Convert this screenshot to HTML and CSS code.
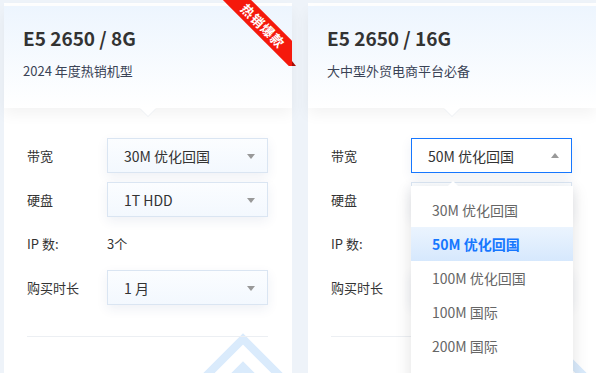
FILE: index.html
```html
<!DOCTYPE html>
<html lang="zh-CN">
<head>
    <meta charset="UTF-8">
    <meta name="viewport" content="width=device-width, initial-scale=1.0">
    <title>服务器选购</title>
    <link rel="stylesheet" href="styles.css">
</head>
<body>
    <div id="main">
        <!-- card 1 -->
        <div class="card">
            <div class="deco">
                <svg width="288" height="400" viewBox="0 0 288 400">
                    <polyline points="169,403 239,333 309,403" fill="none" stroke="#daebfc" stroke-width="8"/>
                    <polyline points="169,431 239,361 309,431" fill="none" stroke="#daebfc" stroke-width="8"/>
                </svg>
            </div>
            <div class="ribbon"><span>热销爆款</span></div>
            <div class="fold"></div>
            <div class="card-head">
                <h2>E5 2650 / 8G</h2>
                <p>2024 年度热销机型</p>
            </div>
            <div class="card-body">
                <div class="row">
                    <label>带宽</label>
                    <div class="select"><span>30M 优化回国</span><i class="arrow"></i></div>
                </div>
                <div class="row">
                    <label>硬盘</label>
                    <div class="select"><span>1T HDD</span><i class="arrow"></i></div>
                </div>
                <div class="row">
                    <label>IP 数:</label>
                    <span class="value">3个</span>
                </div>
                <div class="row">
                    <label>购买时长</label>
                    <div class="select"><span>1 月</span><i class="arrow"></i></div>
                </div>
                <div class="divider"></div>
            </div>
        </div>

        <!-- card 2 -->
        <div class="card">
            <div class="deco">
                <svg width="288" height="400" viewBox="0 0 288 400">
                    <polyline points="169,403 239,333 309,403" fill="none" stroke="#daebfc" stroke-width="8"/>
                    <polyline points="169,431 239,361 309,431" fill="none" stroke="#daebfc" stroke-width="8"/>
                </svg>
            </div>
            <div class="card-head">
                <h2>E5 2650 / 16G</h2>
                <p>大中型外贸电商平台必备</p>
            </div>
            <div class="card-body">
                <div class="row">
                    <label>带宽</label>
                    <div class="select open"><span>50M 优化回国</span><i class="arrow up"></i>
                        <ul class="dropdown">
                            <li>30M 优化回国</li>
                            <li class="active">50M 优化回国</li>
                            <li>100M 优化回国</li>
                            <li>100M 国际</li>
                            <li>200M 国际</li>
                        </ul>
                    </div>
                </div>
                <!-- these sit under the open dropdown -->
                <div class="row">
                    <label>硬盘</label>
                    <div class="select"></div>
                </div>
                <div class="row">
                    <label>IP 数:</label>
                </div>
                <div class="row">
                    <label>购买时长</label>
                    <div class="select"></div>
                </div>
                <div class="divider"></div>
            </div>
        </div>
    </div>
</body>
</html>
```

FILE: styles.css
```css
body {
    font-family: "Noto Sans CJK SC", "Noto Sans", sans-serif;
    background: #eef3f9;
    margin: 0;
    overflow: hidden;
}

#main {
    display: flex;
    gap: 16px;
    padding: 3px 0 0 4px;
    height: 370px;
}

.card {
    position: relative;
    flex: none;
    width: 288px;
    height: 400px;
    padding-top: 3px;
    background: #fff;
}

.deco {
    position: absolute;
    top: 3px;
    left: 0;
    right: 0;
    bottom: 0;
    overflow: hidden;
}

.deco svg {
    display: block;
}

/* corner ribbon */
.ribbon {
    position: absolute;
    top: -3px;
    right: 0;
    width: 70px;
    height: 66px;
    overflow: hidden;
    z-index: 3;
}

.ribbon span {
    position: absolute;
    left: -14px;
    top: 16px;
    width: 110px;
    height: 20px;
    line-height: 20px;
    background: #f5190c;
    color: #fff;
    font-size: 13px;
    font-weight: bold;
    text-align: center;
    letter-spacing: 1px;
    transform: rotate(45deg);
}

.fold {
    position: absolute;
    top: 58px;
    right: -4px;
    width: 0;
    height: 0;
    border-top: 5px solid transparent;
    border-left: 4px solid #a50c05;
    z-index: 2;
}

.card-head {
    position: relative;
    height: 102px;
    box-sizing: border-box;
    padding: 19px 19px 0;
    background: linear-gradient(#edf5fe, #fff);
    box-shadow: 0 6px 14px rgba(0, 0, 0, 0.05);
    z-index: 1;
}

.card-head::after {
    content: "";
    position: absolute;
    left: 136px;
    bottom: -8px;
    border-left: 8px solid transparent;
    border-right: 8px solid transparent;
    border-top: 8px solid #fff;
    filter: drop-shadow(0 1px 0 #eceff3);
}

.card-head h2 {
    margin: 0;
    font-size: 19px;
    line-height: 26px;
    color: #333;
}

.card-head p {
    margin: 10px 0 0;
    font-size: 13px;
    line-height: 20px;
    color: #3a4356;
}

.card-body {
    position: relative;
    padding: 30px 24px 0 23px;
    z-index: 2;
}

.row {
    display: flex;
    align-items: center;
    height: 35px;
    margin-bottom: 9px;
}

.row label {
    width: 80px;
    font-size: 13px;
    color: #333;
}

.value {
    font-size: 13px;
    color: #333;
}

.select {
    position: relative;
    display: flex;
    align-items: center;
    width: 161px;
    height: 35px;
    box-sizing: border-box;
    padding-left: 16px;
    border: 1px solid #dae5f2;
    background: linear-gradient(#fbfdff, #f3f8fe);
    box-shadow: 0 4px 12px rgba(40, 70, 130, 0.08);
    font-size: 14px;
    color: #333;
}

.select.open {
    border-color: #1677ff;
    background: #fff;
}

.arrow {
    position: absolute;
    right: 12px;
    top: 15px;
    border-left: 4px solid transparent;
    border-right: 4px solid transparent;
    border-top: 5px solid #999;
}

.arrow.up {
    top: 14px;
    border-top: none;
    border-bottom: 5px solid #999;
}

.divider {
    margin-top: 31px;
    border-top: 1px solid #eceff3;
    width: 241px;
}

.dropdown {
    position: absolute;
    top: 47px;
    left: -1px;
    width: 162px;
    margin: 0;
    padding: 7px 0 30px;
    list-style: none;
    background: #fff;
    box-shadow: 0 4px 16px rgba(0, 0, 0, 0.12);
    z-index: 5;
}

.dropdown::before {
    content: "";
    position: absolute;
    top: -5px;
    left: 37px;
    border-left: 5px solid transparent;
    border-right: 5px solid transparent;
    border-bottom: 5px solid #fff;
}

.dropdown li {
    height: 34px;
    line-height: 34px;
    padding-left: 21px;
    font-size: 14px;
    color: #666;
}

.dropdown li.active {
    background: linear-gradient(#ebf4fe, #d6e8fd);
    color: #1677ff;
    font-weight: bold;
}
```
